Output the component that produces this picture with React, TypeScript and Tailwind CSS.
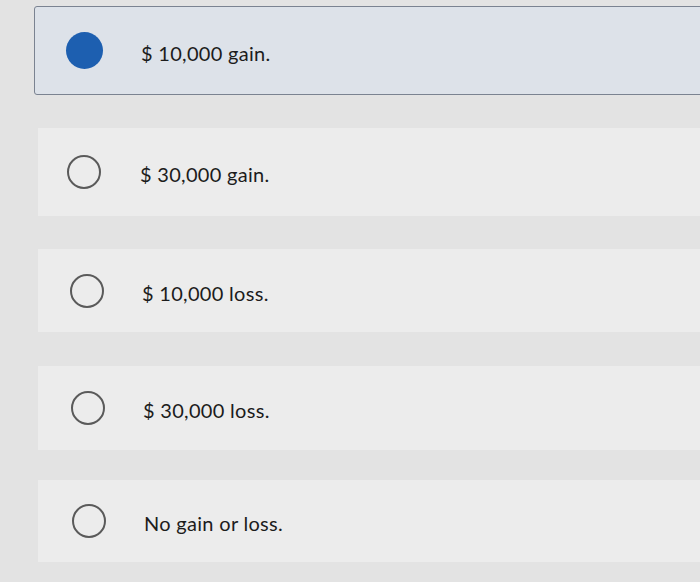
const options = [
  { label: "$ 10,000 gain.", selected: true, h: "h-[89px]", mt: "mt-[6px]", circleX: "ml-[31px]", textX: "ml-[38px]" },
  { label: "$ 30,000 gain.", selected: false, h: "h-[88px]", mt: "mt-[33px]", circleX: "ml-[29px]", textX: "ml-[39px]" },
  { label: "$ 10,000 loss.", selected: false, h: "h-[83px]", mt: "mt-[33px]", circleX: "ml-[32px]", textX: "ml-[38px]" },
  { label: "$ 30,000 loss.", selected: false, h: "h-[84px]", mt: "mt-[34px]", circleX: "ml-[33px]", textX: "ml-[38px]" },
  { label: "No gain or loss.", selected: false, h: "h-[82px]", mt: "mt-[30px]", circleX: "ml-[34px]", textX: "ml-[38px]" },
];

function Radio({ selected }: { selected: boolean }) {
  if (selected) {
    return <span className="block w-[37px] h-[37px] rounded-full bg-[#1d5fb0]" />;
  }
  return <span className="block w-[34px] h-[34px] rounded-full border-2 border-[#5a5a5a]" />;
}

export default function App() {
  return (
    <div
      className="w-[700px] h-[582px] overflow-hidden bg-[#e3e3e3] pl-[34px]"
      style={{ fontFamily: "Lato, 'Liberation Sans', sans-serif" }}
    >
      {options.map((o) => (
        <div
          key={o.label}
          className={
            o.selected
              ? `${o.h} ${o.mt} flex items-center rounded-[3px] border border-[#7b8391] bg-[#dde2e9] -mr-2`
              : `${o.h} ${o.mt} flex items-center bg-[#ececec] ml-[4px]`
          }
        >
          <span className={o.circleX}>
            <Radio selected={o.selected} />
          </span>
          <span className={`${o.textX} pt-[4px] text-[20px] text-[#1c1c1c] tracking-[0.3px]`}>{o.label}</span>
        </div>
      ))}
    </div>
  );
}
